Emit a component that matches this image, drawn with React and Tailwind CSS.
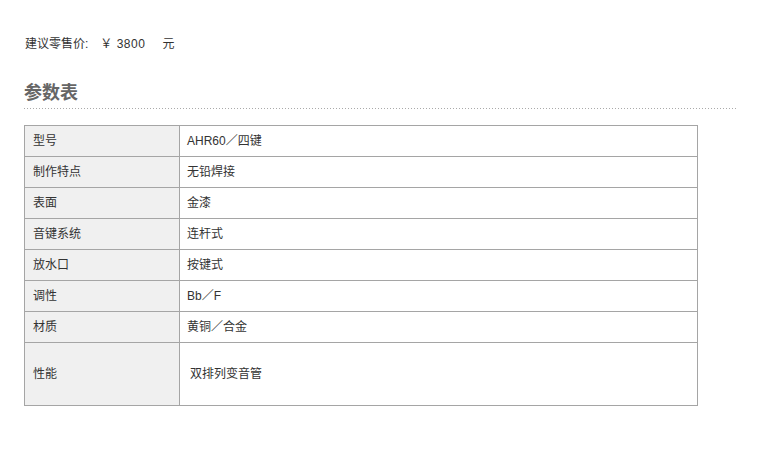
const rows = [
  ['型号', 'AHR60／四键'],
  ['制作特点', '无铅焊接'],
  ['表面', '金漆'],
  ['音键系统', '连杆式'],
  ['放水口', '按键式'],
  ['调性', 'Bb／F'],
  ['材质', '黄铜／合金'],
]

export default function App() {
  return (
    <div
      className="h-[455px] w-[761px] bg-white pl-6 pt-[35px] text-[12px] text-[#333]"
      style={{ fontFamily: '"Liberation Sans", Arial, "Noto Sans CJK SC", sans-serif' }}
    >
      {/* price */}
      <div className="flex h-[18px] items-center pl-px leading-[18px]">
        <span>建议零售价:</span>
        <span className="ml-[12px] tracking-[0.5px]">￥ 3800</span>
        <span className="ml-[17px]">元</span>
      </div>

      {/* heading */}
      <h2 className="mt-[29px] text-[18px] font-bold leading-[22px] text-[#666]">参数表</h2>
      <div className="mt-[4px] h-px w-[713px] bg-[linear-gradient(to_right,#aaa_1px,transparent_1px)] bg-[length:3px_1px]" />

      {/* spec table */}
      <table className="mt-[16px] w-[674px] border-collapse border border-[#a5a5a5]">
        <tbody>
          {rows.map(([k, v]) => (
            <tr key={k} className="h-[31px]">
              <td className="w-[155px] border border-[#a5a5a5] bg-[#f0f0f0] pl-2 align-middle">{k}</td>
              <td className="border border-[#a5a5a5] pl-[7px] align-middle">{v}</td>
            </tr>
          ))}
          <tr className="h-[63px]">
            <td className="w-[155px] border border-[#a5a5a5] bg-[#f0f0f0] pl-2 align-middle">性能</td>
            <td className="border border-[#a5a5a5] pl-[10px] align-middle">双排列变音管</td>
          </tr>
        </tbody>
      </table>
    </div>
  )
}
